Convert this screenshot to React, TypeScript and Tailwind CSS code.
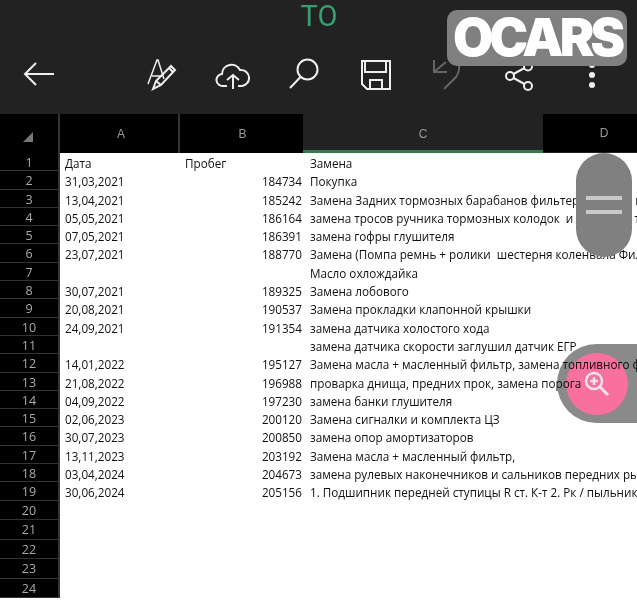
const rows: [string, string, string, string][] = [
  ["1", "Дата", "Пробег", "Замена"],
  ["2", "31,03,2021", "184734", "Покупка"],
  ["3", "13,04,2021", "185242", "Замена Задних тормозных барабанов фильтер салона и масляный фильтр"],
  ["4", "05,05,2021", "186164", "замена тросов ручника тормозных колодок  и передних тормозных"],
  ["5", "07,05,2021", "186391", "замена гофры глушителя"],
  ["6", "23,07,2021", "188770", "Замена (Помпа ремнь + ролики  шестерня коленвала Фильтр"],
  ["7", "", "", "Масло охлождайка"],
  ["8", "30,07,2021", "189325", "Замена лобового"],
  ["9", "20,08,2021", "190537", "Замена прокладки клапонной крышки"],
  ["10", "24,09,2021", "191354", "замена датчика холостого хода"],
  ["11", "", "", "замена датчика скорости заглушил датчик ЕГР"],
  ["12", "14,01,2022", "195127", "Замена масла + масленный фильтр, замена топливного фильтра"],
  ["13", "21,08,2022", "196988", "проварка днища, предних прок, замена порога"],
  ["14", "04,09,2022", "197230", "замена банки глушителя"],
  ["15", "02,06,2023", "200120", "Замена сигналки и комплекта ЦЗ"],
  ["16", "30,07,2023", "200850", "замена опор амортизаторов"],
  ["17", "13,11,2023", "203192", "Замена масла + масленный фильтр,"],
  ["18", "03,04,2024", "204673", "замена рулевых наконечников и сальников передних рычагов"],
  ["19", "30,06,2024", "205156", "1. Подшипник передней ступицы R ст. К-т 2. Рк / пыльник"],
];
const emptyRows = ["20", "21", "22", "23", "24"];

function Icon({ className, children, width, height }: { className: string; children: React.ReactNode; width: number; height: number }) {
  return (
    <svg
      width={width}
      height={height}
      viewBox={`0 0 ${width} ${height}`}
      fill="none"
      stroke="currentColor"
      strokeWidth="2"
      className={className}
    >
      {children}
    </svg>
  );
}

function Toolbar() {
  return (
    <div className="h-[114px] bg-[#222222] text-[#eeeeee] shrink-0">
      <div className="flex justify-center pl-[1px] h-[32px] text-[29px] leading-[32px] font-normal text-[#37a070] font-['Roboto',sans-serif]">
        ТО
      </div>
      <div className="flex items-center h-[50px] mt-[17px] pl-[23px]">
        <Icon width={32} height={28} className="mt-[-1px]">
          <path d="M31 14H2M13 3 2 14l11 11" />
        </Icon>
        <Icon width={32} height={34} className="ml-[92px]">
          <path strokeWidth="1.5" d="M1 27 10 3h1l6 19M5 19h10" />
          <path strokeWidth="2" d="M6 32l3-8L24 9l4 4-14 15zM9 24l5 4M22 11l4 4" />
        </Icon>
        <Icon width={35} height={28} className="ml-[36px] mt-[3px]">
          <path d="M12 24H8a6 6 0 0 1-1-12A9.500 9.500 0 0 1 25 8a8 8 0 0 1 2 16h-4" />
          <path d="M18 27V13M12 18l6-5 6 5" />
        </Icon>
        <Icon width={32} height={32} className="ml-[38px]">
          <circle cx="19.5" cy="11.500" r="10" />
          <path d="M12.500 19 2 30" />
        </Icon>
        <Icon width={31} height={31} className="ml-[40px]">
          <path d="M2 2h28v28H7l-5-5zM5 2v11h21V2M10 30v-9h12v9" />
        </Icon>
        <Icon width={32} height={32} className="ml-[41px] mt-[2px] text-[#666666]">
          <path d="M2 1v12h13M2 13 14 3" />
          <path d="M27 5c1 6-1 10-3 13L12 30" />
        </Icon>
        <Icon width={30} height={29} className="ml-[40px] mt-[4px]">
          <circle cx="6" cy="14" r="4" />
          <circle cx="24" cy="4.500" r="4" />
          <circle cx="24" cy="24" r="4" />
          <path d="m9.500 12 11-6M9.500 16l11 6" />
        </Icon>
        <div className="ml-[55px] mt-[2px] flex flex-col gap-[4px]">
          <div className="w-[6px] h-[6px] rounded-full bg-[#eeeeee]" />
          <div className="w-[6px] h-[6px] rounded-full bg-[#eeeeee]" />
          <div className="w-[6px] h-[6px] rounded-full bg-[#eeeeee]" />
        </div>
      </div>
    </div>
  );
}

function ColumnHeader() {
  return (
    <div className="flex h-[39px] bg-[#222222] text-[12px] text-[#999999] shrink-0 font-['Liberation_Sans',sans-serif]">
      <div className="w-[60px] bg-black flex items-end justify-end pb-[11px] pr-[25px] border-r-2 border-[#333333]">
        <div className="w-0 h-0 border-l-[10px] border-l-transparent border-b-[10px] border-b-[#777777]" />
      </div>
      <div className="w-[120px] bg-black flex items-center justify-center pl-[4px] border-r-2 border-[#333333]">A</div>
      <div className="w-[123px] bg-black flex items-center justify-center pl-[2px]">B</div>
      <div className="w-[240px] flex items-center justify-center border-b-[3px] border-[#2f7d4f] pt-[3px]">C</div>
      <div className="flex-1 bg-black flex items-center justify-center pl-[28px] mb-[1px]">D</div>
    </div>
  );
}

function Row({ row }: { row: [string, string, string, string] }) {
  const [num, date, km, text] = row;
  return (
    <div className="flex h-[18.3px] leading-[20.3px]">
      <div className="w-[60px] shrink-0 bg-black border-b border-[#333333] border-r-2 border-r-[#333333] text-center text-[#aaaaaa] text-[12.5px]">
        {num}
      </div>
      <div className="w-[120px] shrink-0 pl-[5px]">{date}</div>
      <div className="w-[122px] shrink-0 pl-[5px] text-right">
        {num === "1" ? <span className="block text-left">{km}</span> : km}
      </div>
      <div className="pl-[8px] whitespace-pre">{text}</div>
    </div>
  );
}

export default function App() {
  return (
    <div className="w-[637px] h-[600px] overflow-hidden relative bg-white flex flex-col font-['Open_Sans',sans-serif] text-[11.7px] text-[#111111]">
      <Toolbar />
      <ColumnHeader />
      <div className="flex flex-col overflow-hidden">
        {rows.map((r) => (
          <Row key={r[0]} row={r} />
        ))}
        {emptyRows.map((n) => (
          <div key={n} className="flex h-[19.5px] leading-[20.5px]">
            <div className="w-[60px] shrink-0 bg-black border-b border-[#333333] border-r-2 border-r-[#333333] text-center text-[#aaaaaa] text-[12.5px]">
              {n}
            </div>
          </div>
        ))}
      </div>

      {/* watermark */}
      <div className="absolute left-[447px] top-[10px] w-[180px] h-[56px] rounded-[10px] bg-[#808080] flex items-center justify-center text-white font-['Inter',sans-serif] font-black text-[52px] tracking-[-4px]">
        OCARS
      </div>

      {/* split handle */}
      <div className="absolute left-[576px] top-[153px] w-[56px] h-[104px] rounded-full bg-[#808080] flex flex-col items-center justify-center gap-[10px]">
        <div className="w-[36px] h-[4px] bg-[#c9c9c9]" />
        <div className="w-[36px] h-[4px] bg-[#c9c9c9]" />
      </div>

      {/* zoom button */}
      <div className="absolute left-[557px] top-[344px] w-[120px] h-[79px] rounded-full bg-[#8a8a8a] mix-blend-multiply flex items-center pl-[9px]">
        <div className="w-[62px] h-[62px] rounded-full bg-[#f8709e] flex items-center justify-center">
          <svg width="26" height="26" viewBox="0 0 26 26" fill="none" stroke="#f3e4ea" strokeWidth="2.5">
            <circle cx="10" cy="10" r="8" />
            <path d="M10 6v8M6 10h8" />
            <path strokeWidth="3" d="m16 16 8 8" />
          </svg>
        </div>
      </div>
    </div>
  );
}
